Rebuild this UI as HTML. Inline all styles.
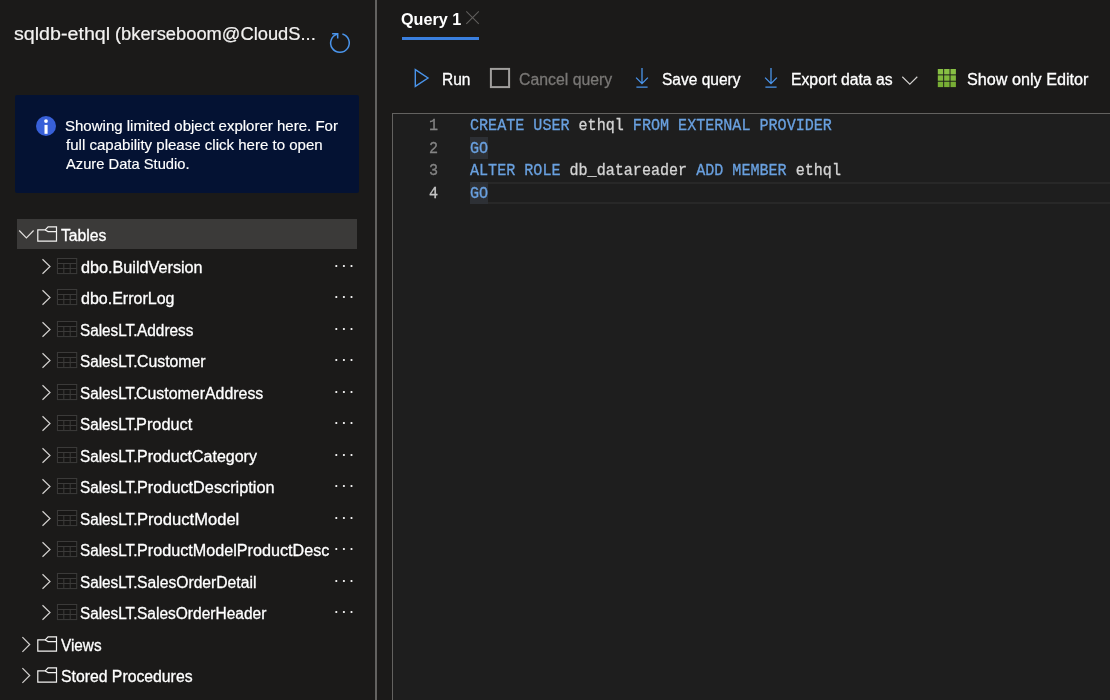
<!DOCTYPE html>
<html>
<head>
<meta charset="utf-8">
<title>Query editor</title>
<style>
  html, body { margin: 0; padding: 0; }
  body {
    width: 1110px; height: 700px; overflow: hidden; position: relative;
    background: #1b1a19; color: #ffffff;
    font-family: "Liberation Sans", sans-serif;
  }
  #root { position: absolute; left: 0; top: 0; width: 1110px; height: 700px; overflow: hidden; will-change: transform; }
  .abs { position: absolute; white-space: nowrap; }
  .t { position: absolute; white-space: nowrap; line-height: 20px; transform-origin: 0 0; }
  svg { position: absolute; left: 0; top: 0; overflow: visible; }

  #info { left: 15px; top: 95px; width: 344px; height: 97.5px; background: #041233; border-radius: 2px; }
  #tblrow { left: 17px; top: 219px; width: 340px; height: 29.7px; background: #3b3a39; }
  #divider { left: 375px; top: 0; width: 2px; height: 700px; background: #636260; }
  #tabline { left: 402px; top: 37px; width: 77px; height: 3px; background: #3a7fde; }

  #editor { left: 392px; top: 113px; width: 730px; height: 600px; background: #1e1e1e; border: 1px solid #636260; box-sizing: border-box; }
  #curline { left: 469.7px; top: 181.9px; width: 660px; height: 17.9px; border: 2px solid #282828; }
  .m { font-family: "Liberation Mono", monospace; }
  .k { color: #6aa1e0; }
  .hl { left: 469.9px; width: 18.2px; height: 21.9px; background: #2d3035; }
</style>
</head>
<body>
<div id="root">

<!-- ============ LEFT PANE ============ -->
<div class="t" style="left:13.7px;top:24px;font-size:18px;color:#f3f2f1;transform:scaleX(1.0919);-webkit-text-stroke:0.2px">sqldb-ethql</div>
<div class="t" style="left:114.8px;top:24px;font-size:18px;color:#f3f2f1;transform:scaleX(1.0171);-webkit-text-stroke:0.2px">(bkerseboom@CloudS...</div>
<div id="info" class="abs"></div>
<div class="t" style="left:64.5px;top:116px;font-size:14.5px;color:#ffffff;transform:scaleX(1.0355);-webkit-text-stroke:0.15px">Showing limited object explorer here. For</div>
<div class="t" style="left:65.7px;top:135px;font-size:14.5px;color:#ffffff;transform:scaleX(1.0373);-webkit-text-stroke:0.15px">full capability please click here to open</div>
<div class="t" style="left:65.5px;top:154px;font-size:14.5px;color:#ffffff;transform:scaleX(1.0151);-webkit-text-stroke:0.15px">Azure Data Studio.</div>
<div id="tblrow" class="abs"></div>
<div class="t" style="left:60.5px;top:226px;font-size:16px;color:#ffffff;transform:scaleX(0.983);-webkit-text-stroke:0.3px">Tables</div>
<div class="t" style="left:80.5px;top:258px;font-size:16px;color:#ffffff;transform:scaleX(1.0128);-webkit-text-stroke:0.3px">dbo.BuildVersion</div>
<div class="t" style="left:80.5px;top:289px;font-size:16px;color:#ffffff;transform:scaleX(1.0008);-webkit-text-stroke:0.3px">dbo.ErrorLog</div>
<div class="t" style="left:79.5px;top:321px;font-size:16px;color:#ffffff;transform:scaleX(0.9557);-webkit-text-stroke:0.3px">SalesLT.</div>
<div class="t" style="left:136.6px;top:321px;font-size:16px;color:#ffffff;transform:scaleX(0.9624);-webkit-text-stroke:0.3px">Address</div>
<div class="t" style="left:79.5px;top:352px;font-size:16px;color:#ffffff;transform:scaleX(0.9557);-webkit-text-stroke:0.3px">SalesLT.</div>
<div class="t" style="left:136.5px;top:352px;font-size:16px;color:#ffffff;transform:scaleX(0.9895);-webkit-text-stroke:0.3px">Customer</div>
<div class="t" style="left:79.5px;top:384px;font-size:16px;color:#ffffff;transform:scaleX(0.9557);-webkit-text-stroke:0.3px">SalesLT.</div>
<div class="t" style="left:135.6px;top:384px;font-size:16px;color:#ffffff;transform:scaleX(0.9942);-webkit-text-stroke:0.3px">CustomerAddress</div>
<div class="t" style="left:79.5px;top:415px;font-size:16px;color:#ffffff;transform:scaleX(0.9557);-webkit-text-stroke:0.3px">SalesLT.</div>
<div class="t" style="left:136.3px;top:415px;font-size:16px;color:#ffffff;transform:scaleX(1.0196);-webkit-text-stroke:0.3px">Product</div>
<div class="t" style="left:79.5px;top:447px;font-size:16px;color:#ffffff;transform:scaleX(0.9557);-webkit-text-stroke:0.3px">SalesLT.</div>
<div class="t" style="left:136.6px;top:447px;font-size:16px;color:#ffffff;transform:scaleX(0.9986);-webkit-text-stroke:0.3px">ProductCategory</div>
<div class="t" style="left:79.5px;top:478px;font-size:16px;color:#ffffff;transform:scaleX(0.9557);-webkit-text-stroke:0.3px">SalesLT.</div>
<div class="t" style="left:136.6px;top:478px;font-size:16px;color:#ffffff;transform:scaleX(1.0172);-webkit-text-stroke:0.3px">ProductDescription</div>
<div class="t" style="left:79.5px;top:510px;font-size:16px;color:#ffffff;transform:scaleX(0.9557);-webkit-text-stroke:0.3px">SalesLT.</div>
<div class="t" style="left:136.6px;top:510px;font-size:16px;color:#ffffff;transform:scaleX(1.0362);-webkit-text-stroke:0.3px">ProductModel</div>
<div class="t" style="left:79.5px;top:541px;font-size:16px;color:#ffffff;transform:scaleX(0.9557);-webkit-text-stroke:0.3px">SalesLT.</div>
<div class="t" style="left:136.6px;top:541px;font-size:16px;color:#ffffff;transform:scaleX(1.011);-webkit-text-stroke:0.3px">ProductModelProductDesc</div>
<div class="t" style="left:79.5px;top:573px;font-size:16px;color:#ffffff;transform:scaleX(0.9557);-webkit-text-stroke:0.3px">SalesLT.</div>
<div class="t" style="left:136.5px;top:573px;font-size:16px;color:#ffffff;transform:scaleX(0.9798);-webkit-text-stroke:0.3px">SalesOrderDetail</div>
<div class="t" style="left:79.5px;top:604px;font-size:16px;color:#ffffff;transform:scaleX(0.9557);-webkit-text-stroke:0.3px">SalesLT.</div>
<div class="t" style="left:136.5px;top:604px;font-size:16px;color:#ffffff;transform:scaleX(0.9695);-webkit-text-stroke:0.3px">SalesOrderHeader</div>
<div class="t" style="left:60.7px;top:636px;font-size:16px;color:#ffffff;transform:scaleX(0.9567);-webkit-text-stroke:0.3px">Views</div>
<div class="t" style="left:60.6px;top:667px;font-size:16px;color:#ffffff;transform:scaleX(0.986);-webkit-text-stroke:0.3px">Stored Procedures</div>
<svg width="1110" height="700" viewBox="0 0 1110 700" fill="none">
<g stroke="#4a94ea" stroke-width="1.5" fill="none">
<path d="M342.4 34 A9.3 9.3 0 1 1 337.7 33.95"/>
<path d="M332.1 33.8 H337.7 V38.4"/>
</g>
<circle cx="46" cy="126" r="10" fill="#3860d8"/>
<circle cx="46" cy="121.1" r="1.9" fill="#fff"/>
<rect x="44.5" y="124.9" width="3.1" height="8.9" fill="#fff"/>
<path d="M19.2 230.5 L26.4 237.8 L33.6 230.5" stroke="#e1dfdd" stroke-width="1.2"/>
<g stroke="#f3f2f1" stroke-width="1.2" transform="translate(0 0)"><path d="M37.8 229.9 H45.2 L48.1 226.8 H56.5 V241.1 H37.8 Z"/><path d="M45.2 229.9 L48.1 231.6 H56.5"/></g>
<g transform="translate(0 0)">
<path d="M42.5 259.2 L50 266.5 L42.5 273.8" stroke="#d2d0ce" stroke-width="1.2"/>
<g stroke="#3b3a39" stroke-width="1.05"><rect x="57.45" y="258.5" width="19.25" height="15.05" fill="#171615"/><path d="M57.45 263.5 H76.7 M57.45 268.5 H76.7 M63.8 263.5 V273.5 M70.2 263.5 V273.5"/></g>
<g fill="#fff"><circle cx="336.3" cy="266" r="1.1"/><circle cx="343.9" cy="266" r="1.1"/><circle cx="351.5" cy="266" r="1.1"/></g>
</g>
<g transform="translate(0 31)">
<path d="M42.5 259.2 L50 266.5 L42.5 273.8" stroke="#d2d0ce" stroke-width="1.2"/>
<g stroke="#3b3a39" stroke-width="1.05"><rect x="57.45" y="258.5" width="19.25" height="15.05" fill="#171615"/><path d="M57.45 263.5 H76.7 M57.45 268.5 H76.7 M63.8 263.5 V273.5 M70.2 263.5 V273.5"/></g>
<g fill="#fff"><circle cx="336.3" cy="266" r="1.1"/><circle cx="343.9" cy="266" r="1.1"/><circle cx="351.5" cy="266" r="1.1"/></g>
</g>
<g transform="translate(0 63)">
<path d="M42.5 259.2 L50 266.5 L42.5 273.8" stroke="#d2d0ce" stroke-width="1.2"/>
<g stroke="#3b3a39" stroke-width="1.05"><rect x="57.45" y="258.5" width="19.25" height="15.05" fill="#171615"/><path d="M57.45 263.5 H76.7 M57.45 268.5 H76.7 M63.8 263.5 V273.5 M70.2 263.5 V273.5"/></g>
<g fill="#fff"><circle cx="336.3" cy="266" r="1.1"/><circle cx="343.9" cy="266" r="1.1"/><circle cx="351.5" cy="266" r="1.1"/></g>
</g>
<g transform="translate(0 94)">
<path d="M42.5 259.2 L50 266.5 L42.5 273.8" stroke="#d2d0ce" stroke-width="1.2"/>
<g stroke="#3b3a39" stroke-width="1.05"><rect x="57.45" y="258.5" width="19.25" height="15.05" fill="#171615"/><path d="M57.45 263.5 H76.7 M57.45 268.5 H76.7 M63.8 263.5 V273.5 M70.2 263.5 V273.5"/></g>
<g fill="#fff"><circle cx="336.3" cy="266" r="1.1"/><circle cx="343.9" cy="266" r="1.1"/><circle cx="351.5" cy="266" r="1.1"/></g>
</g>
<g transform="translate(0 126)">
<path d="M42.5 259.2 L50 266.5 L42.5 273.8" stroke="#d2d0ce" stroke-width="1.2"/>
<g stroke="#3b3a39" stroke-width="1.05"><rect x="57.45" y="258.5" width="19.25" height="15.05" fill="#171615"/><path d="M57.45 263.5 H76.7 M57.45 268.5 H76.7 M63.8 263.5 V273.5 M70.2 263.5 V273.5"/></g>
<g fill="#fff"><circle cx="336.3" cy="266" r="1.1"/><circle cx="343.9" cy="266" r="1.1"/><circle cx="351.5" cy="266" r="1.1"/></g>
</g>
<g transform="translate(0 157)">
<path d="M42.5 259.2 L50 266.5 L42.5 273.8" stroke="#d2d0ce" stroke-width="1.2"/>
<g stroke="#3b3a39" stroke-width="1.05"><rect x="57.45" y="258.5" width="19.25" height="15.05" fill="#171615"/><path d="M57.45 263.5 H76.7 M57.45 268.5 H76.7 M63.8 263.5 V273.5 M70.2 263.5 V273.5"/></g>
<g fill="#fff"><circle cx="336.3" cy="266" r="1.1"/><circle cx="343.9" cy="266" r="1.1"/><circle cx="351.5" cy="266" r="1.1"/></g>
</g>
<g transform="translate(0 189)">
<path d="M42.5 259.2 L50 266.5 L42.5 273.8" stroke="#d2d0ce" stroke-width="1.2"/>
<g stroke="#3b3a39" stroke-width="1.05"><rect x="57.45" y="258.5" width="19.25" height="15.05" fill="#171615"/><path d="M57.45 263.5 H76.7 M57.45 268.5 H76.7 M63.8 263.5 V273.5 M70.2 263.5 V273.5"/></g>
<g fill="#fff"><circle cx="336.3" cy="266" r="1.1"/><circle cx="343.9" cy="266" r="1.1"/><circle cx="351.5" cy="266" r="1.1"/></g>
</g>
<g transform="translate(0 220)">
<path d="M42.5 259.2 L50 266.5 L42.5 273.8" stroke="#d2d0ce" stroke-width="1.2"/>
<g stroke="#3b3a39" stroke-width="1.05"><rect x="57.45" y="258.5" width="19.25" height="15.05" fill="#171615"/><path d="M57.45 263.5 H76.7 M57.45 268.5 H76.7 M63.8 263.5 V273.5 M70.2 263.5 V273.5"/></g>
<g fill="#fff"><circle cx="336.3" cy="266" r="1.1"/><circle cx="343.9" cy="266" r="1.1"/><circle cx="351.5" cy="266" r="1.1"/></g>
</g>
<g transform="translate(0 252)">
<path d="M42.5 259.2 L50 266.5 L42.5 273.8" stroke="#d2d0ce" stroke-width="1.2"/>
<g stroke="#3b3a39" stroke-width="1.05"><rect x="57.45" y="258.5" width="19.25" height="15.05" fill="#171615"/><path d="M57.45 263.5 H76.7 M57.45 268.5 H76.7 M63.8 263.5 V273.5 M70.2 263.5 V273.5"/></g>
<g fill="#fff"><circle cx="336.3" cy="266" r="1.1"/><circle cx="343.9" cy="266" r="1.1"/><circle cx="351.5" cy="266" r="1.1"/></g>
</g>
<g transform="translate(0 283)">
<path d="M42.5 259.2 L50 266.5 L42.5 273.8" stroke="#d2d0ce" stroke-width="1.2"/>
<g stroke="#3b3a39" stroke-width="1.05"><rect x="57.45" y="258.5" width="19.25" height="15.05" fill="#171615"/><path d="M57.45 263.5 H76.7 M57.45 268.5 H76.7 M63.8 263.5 V273.5 M70.2 263.5 V273.5"/></g>
<g fill="#fff"><circle cx="336.3" cy="266" r="1.1"/><circle cx="343.9" cy="266" r="1.1"/><circle cx="351.5" cy="266" r="1.1"/></g>
</g>
<g transform="translate(0 315)">
<path d="M42.5 259.2 L50 266.5 L42.5 273.8" stroke="#d2d0ce" stroke-width="1.2"/>
<g stroke="#3b3a39" stroke-width="1.05"><rect x="57.45" y="258.5" width="19.25" height="15.05" fill="#171615"/><path d="M57.45 263.5 H76.7 M57.45 268.5 H76.7 M63.8 263.5 V273.5 M70.2 263.5 V273.5"/></g>
<g fill="#fff"><circle cx="336.3" cy="266" r="1.1"/><circle cx="343.9" cy="266" r="1.1"/><circle cx="351.5" cy="266" r="1.1"/></g>
</g>
<g transform="translate(0 346)">
<path d="M42.5 259.2 L50 266.5 L42.5 273.8" stroke="#d2d0ce" stroke-width="1.2"/>
<g stroke="#3b3a39" stroke-width="1.05"><rect x="57.45" y="258.5" width="19.25" height="15.05" fill="#171615"/><path d="M57.45 263.5 H76.7 M57.45 268.5 H76.7 M63.8 263.5 V273.5 M70.2 263.5 V273.5"/></g>
<g fill="#fff"><circle cx="336.3" cy="266" r="1.1"/><circle cx="343.9" cy="266" r="1.1"/><circle cx="351.5" cy="266" r="1.1"/></g>
</g>
<path d="M22.4 637.2 L29.7 644.5 L22.4 651.8" stroke="#d2d0ce" stroke-width="1.2"/>
<g stroke="#f3f2f1" stroke-width="1.2" transform="translate(0 410)"><path d="M37.8 229.9 H45.2 L48.1 226.8 H56.5 V241.1 H37.8 Z"/><path d="M45.2 229.9 L48.1 231.6 H56.5"/></g>
<path d="M22.4 668.2 L29.7 675.5 L22.4 682.8" stroke="#d2d0ce" stroke-width="1.2"/>
<g stroke="#f3f2f1" stroke-width="1.2" transform="translate(0 441)"><path d="M37.8 229.9 H45.2 L48.1 226.8 H56.5 V241.1 H37.8 Z"/><path d="M45.2 229.9 L48.1 231.6 H56.5"/></g>
</svg>
<div id="divider" class="abs"></div>

<!-- ============ RIGHT PANE ============ -->
<div class="t" style="left:400.6px;top:9px;font-size:16.5px;color:#ffffff;transform:scaleX(0.9813);font-weight:bold">Query 1</div>
<div id="tabline" class="abs"></div>
<div class="t" style="left:441.6px;top:70px;font-size:16px;color:#ffffff;transform:scaleX(0.9685);-webkit-text-stroke:0.3px">Run</div>
<div class="t" style="left:518.5px;top:70px;font-size:16px;color:#797775;transform:scaleX(0.9895);-webkit-text-stroke:0.3px">Cancel query</div>
<div class="t" style="left:661.6px;top:70px;font-size:16px;color:#ffffff;transform:scaleX(0.97);-webkit-text-stroke:0.3px">Save query</div>
<div class="t" style="left:790.5px;top:70px;font-size:16px;color:#ffffff;transform:scaleX(0.9841);-webkit-text-stroke:0.3px">Export data as</div>
<div class="t" style="left:966.7px;top:70px;font-size:16px;color:#ffffff;transform:scaleX(1.0112);-webkit-text-stroke:0.3px">Show only Editor</div>
<div id="editor" class="abs"></div>
<div class="abs hl" style="top:136.9px;height:21.9px"></div>
<div id="curline" class="abs"></div>
<div class="abs hl" style="top:182px;height:21.7px"></div>
<div class="t m" style="left:469.5px;top:116px;font-size:16.5px;color:#d4d4d4;transform:scaleX(0.9136);-webkit-text-stroke:0.3px"><span class="k">CREATE</span> <span class="k">USER</span> ethql <span class="k">FROM</span> <span class="k">EXTERNAL</span> <span class="k">PROVIDER</span></div>
<div class="t m" style="left:469.5px;top:139px;font-size:16.5px;color:#d4d4d4;transform:scaleX(0.9136);-webkit-text-stroke:0.3px"><span class="k">GO</span></div>
<div class="t m" style="left:469.5px;top:161px;font-size:16.5px;color:#d4d4d4;transform:scaleX(0.9136);-webkit-text-stroke:0.3px"><span class="k">ALTER</span> <span class="k">ROLE</span> db_datareader <span class="k">ADD</span> <span class="k">MEMBER</span> ethql</div>
<div class="t m" style="left:469.5px;top:184px;font-size:16.5px;color:#d4d4d4;transform:scaleX(0.9136);-webkit-text-stroke:0.3px"><span class="k">GO</span></div>
<div class="t m" style="left:428.6px;top:116px;font-size:16.5px;color:#858585;-webkit-text-stroke:0.3px;transform:scaleX(0.9136)">1</div>
<div class="t m" style="left:428.6px;top:139px;font-size:16.5px;color:#858585;-webkit-text-stroke:0.3px;transform:scaleX(0.9136)">2</div>
<div class="t m" style="left:428.6px;top:161px;font-size:16.5px;color:#858585;-webkit-text-stroke:0.3px;transform:scaleX(0.9136)">3</div>
<div class="t m" style="left:428.6px;top:184px;font-size:16.5px;color:#c6c6c6;-webkit-text-stroke:0.3px;transform:scaleX(0.9136)">4</div>
<svg width="1110" height="700" viewBox="0 0 1110 700" fill="none">
<path d="M466.3 11.3 L478.8 23.8 M478.8 11.3 L466.3 23.8" stroke="#605e5c" stroke-width="1.1"/>
<path d="M415.3 69.6 V86.4 L428 78 Z" stroke="#4a94ea" stroke-width="1.4" stroke-linejoin="miter"/>
<rect x="490.9" y="68.9" width="18.2" height="18.2" stroke="#a19f9d" stroke-width="2"/>
<g stroke="#4a94ea" stroke-width="1.3" transform="translate(642 0)"><path d="M0 68 V83.5 M-5.9 77.6 L0 83.6 L5.9 77.6 M-5.6 87.2 H5.6"/></g>
<g stroke="#4a94ea" stroke-width="1.3" transform="translate(771 0)"><path d="M0 68 V83.5 M-5.9 77.6 L0 83.6 L5.9 77.6 M-5.6 87.2 H5.6"/></g>
<path d="M902.3 76.8 L909.8 84.2 L917.3 76.8" stroke="#d2d0ce" stroke-width="1.2"/>
<rect x="937.8" y="69" width="5.4" height="5.4" fill="#88c044"/>
<rect x="944.15" y="69" width="5.4" height="5.4" fill="#88c044"/>
<rect x="950.5" y="69" width="5.4" height="5.4" fill="#88c044"/>
<rect x="937.8" y="75.35" width="5.4" height="5.4" fill="#80b83c"/>
<rect x="944.15" y="75.35" width="5.4" height="5.4" fill="#80b83c"/>
<rect x="950.5" y="75.35" width="5.4" height="5.4" fill="#80b83c"/>
<rect x="937.8" y="81.7" width="5.4" height="5.4" fill="#78ae35"/>
<rect x="944.15" y="81.7" width="5.4" height="5.4" fill="#78ae35"/>
<rect x="950.5" y="81.7" width="5.4" height="5.4" fill="#78ae35"/>
</svg>

</div>
</body>
</html>
